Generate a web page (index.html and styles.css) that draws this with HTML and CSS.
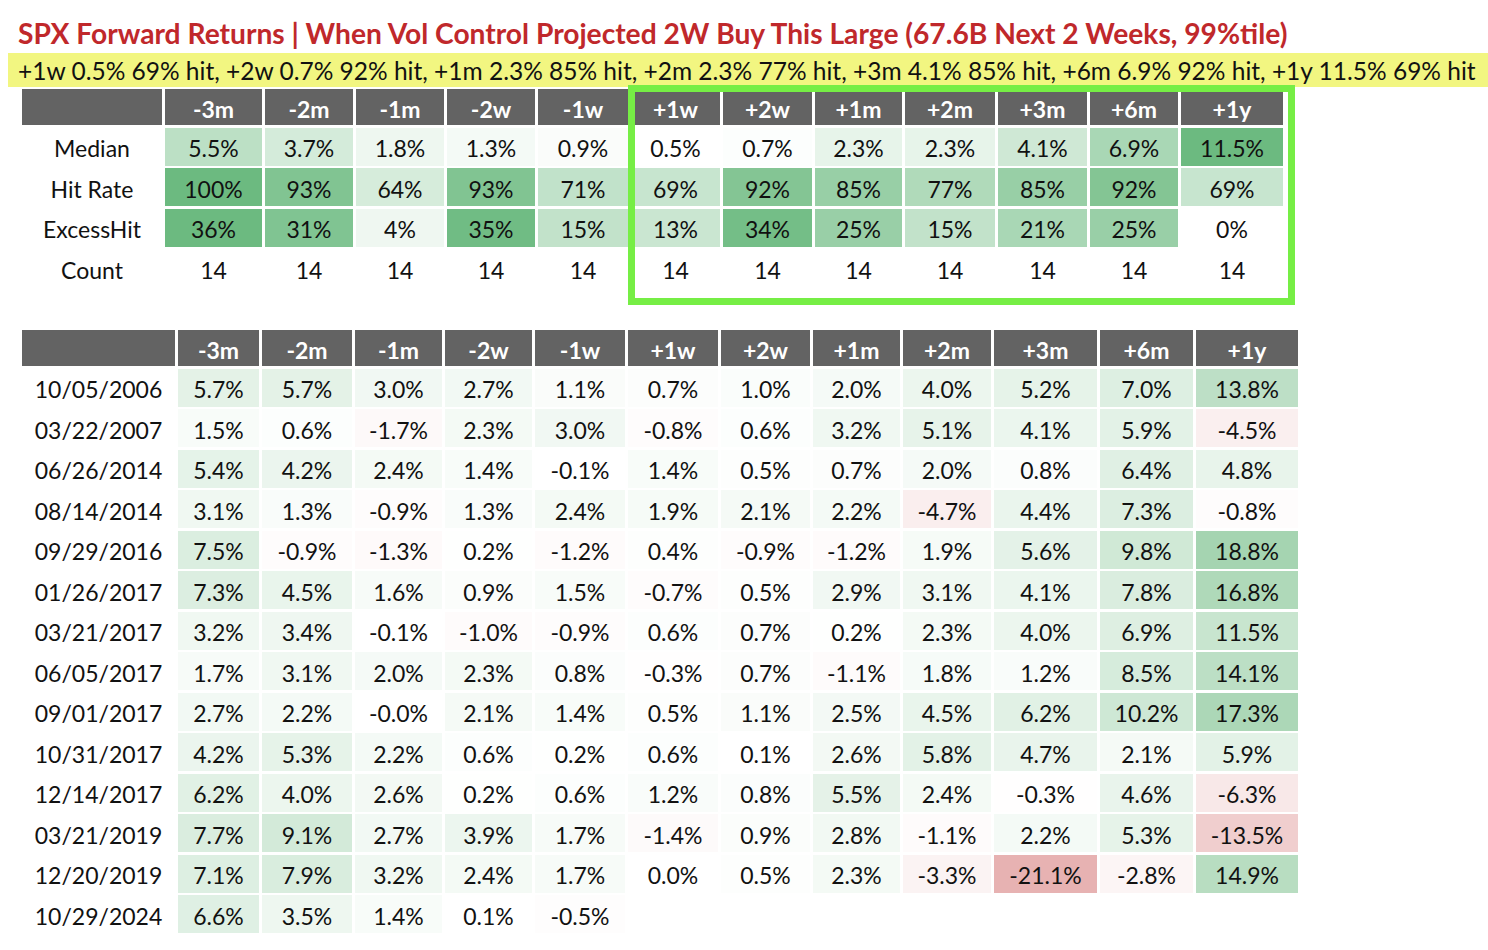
FILE: index.html
```html
<!DOCTYPE html>
<html lang="en">
<head>
<meta charset="utf-8">
<title>SPX Forward Returns</title>
<link rel="stylesheet" href="styles.css">
</head>
<body>
<div class="page">
  <h1 class="title">SPX Forward Returns | When Vol Control Projected 2W Buy This Large (67.6B Next 2 Weeks, 99%tile)</h1>
  <div class="summary">+1w 0.5% 69% hit, +2w 0.7% 92% hit, +1m 2.3% 85% hit, +2m 2.3% 77% hit, +3m 4.1% 85% hit, +6m 6.9% 92% hit, +1y 11.5% 69% hit</div>

  <div class="stats-wrap">
    <div class="grid stats">
      <div class="hd"></div><div class="hd">-3m</div><div class="hd">-2m</div><div class="hd">-1m</div><div class="hd">-2w</div><div class="hd">-1w</div><div class="hd">+1w</div><div class="hd">+2w</div><div class="hd">+1m</div><div class="hd">+2m</div><div class="hd">+3m</div><div class="hd">+6m</div><div class="hd">+1y</div>

      <div class="lbl">Median</div><div class="cell sm">5.5%</div><div class="cell sm">3.7%</div><div class="cell sm">1.8%</div><div class="cell sm">1.3%</div><div class="cell sm">0.9%</div><div class="cell sm">0.5%</div><div class="cell sm">0.7%</div><div class="cell sm">2.3%</div><div class="cell sm">2.3%</div><div class="cell sm">4.1%</div><div class="cell sm">6.9%</div><div class="cell sm">11.5%</div>

      <div class="lbl">Hit Rate</div><div class="cell sh">100%</div><div class="cell sh">93%</div><div class="cell sh">64%</div><div class="cell sh">93%</div><div class="cell sh">71%</div><div class="cell sh">69%</div><div class="cell sh">92%</div><div class="cell sh">85%</div><div class="cell sh">77%</div><div class="cell sh">85%</div><div class="cell sh">92%</div><div class="cell sh">69%</div>

      <div class="lbl">ExcessHit</div><div class="cell se">36%</div><div class="cell se">31%</div><div class="cell se">4%</div><div class="cell se">35%</div><div class="cell se">15%</div><div class="cell se">13%</div><div class="cell se">34%</div><div class="cell se">25%</div><div class="cell se">15%</div><div class="cell se">21%</div><div class="cell se">25%</div><div class="cell se">0%</div>

      <div class="lbl">Count</div><div class="cell">14</div><div class="cell">14</div><div class="cell">14</div><div class="cell">14</div><div class="cell">14</div><div class="cell">14</div><div class="cell">14</div><div class="cell">14</div><div class="cell">14</div><div class="cell">14</div><div class="cell">14</div><div class="cell">14</div>
    </div>
    <div class="highlight"></div>
  </div>

  <div class="grid events">
    <div class="hd"></div><div class="hd">-3m</div><div class="hd">-2m</div><div class="hd">-1m</div><div class="hd">-2w</div><div class="hd">-1w</div><div class="hd">+1w</div><div class="hd">+2w</div><div class="hd">+1m</div><div class="hd">+2m</div><div class="hd">+3m</div><div class="hd">+6m</div><div class="hd">+1y</div>

    <div class="lbl">10/05/2006</div><div class="cell sd">5.7%</div><div class="cell sd">5.7%</div><div class="cell sd">3.0%</div><div class="cell sd">2.7%</div><div class="cell sd">1.1%</div><div class="cell sd">0.7%</div><div class="cell sd">1.0%</div><div class="cell sd">2.0%</div><div class="cell sd">4.0%</div><div class="cell sd">5.2%</div><div class="cell sd">7.0%</div><div class="cell sd">13.8%</div>
    <div class="lbl">03/22/2007</div><div class="cell sd">1.5%</div><div class="cell sd">0.6%</div><div class="cell sd">-1.7%</div><div class="cell sd">2.3%</div><div class="cell sd">3.0%</div><div class="cell sd">-0.8%</div><div class="cell sd">0.6%</div><div class="cell sd">3.2%</div><div class="cell sd">5.1%</div><div class="cell sd">4.1%</div><div class="cell sd">5.9%</div><div class="cell sd">-4.5%</div>
    <div class="lbl">06/26/2014</div><div class="cell sd">5.4%</div><div class="cell sd">4.2%</div><div class="cell sd">2.4%</div><div class="cell sd">1.4%</div><div class="cell sd">-0.1%</div><div class="cell sd">1.4%</div><div class="cell sd">0.5%</div><div class="cell sd">0.7%</div><div class="cell sd">2.0%</div><div class="cell sd">0.8%</div><div class="cell sd">6.4%</div><div class="cell sd">4.8%</div>
    <div class="lbl">08/14/2014</div><div class="cell sd">3.1%</div><div class="cell sd">1.3%</div><div class="cell sd">-0.9%</div><div class="cell sd">1.3%</div><div class="cell sd">2.4%</div><div class="cell sd">1.9%</div><div class="cell sd">2.1%</div><div class="cell sd">2.2%</div><div class="cell sd">-4.7%</div><div class="cell sd">4.4%</div><div class="cell sd">7.3%</div><div class="cell sd">-0.8%</div>
    <div class="lbl">09/29/2016</div><div class="cell sd">7.5%</div><div class="cell sd">-0.9%</div><div class="cell sd">-1.3%</div><div class="cell sd">0.2%</div><div class="cell sd">-1.2%</div><div class="cell sd">0.4%</div><div class="cell sd">-0.9%</div><div class="cell sd">-1.2%</div><div class="cell sd">1.9%</div><div class="cell sd">5.6%</div><div class="cell sd">9.8%</div><div class="cell sd">18.8%</div>
    <div class="lbl">01/26/2017</div><div class="cell sd">7.3%</div><div class="cell sd">4.5%</div><div class="cell sd">1.6%</div><div class="cell sd">0.9%</div><div class="cell sd">1.5%</div><div class="cell sd">-0.7%</div><div class="cell sd">0.5%</div><div class="cell sd">2.9%</div><div class="cell sd">3.1%</div><div class="cell sd">4.1%</div><div class="cell sd">7.8%</div><div class="cell sd">16.8%</div>
    <div class="lbl">03/21/2017</div><div class="cell sd">3.2%</div><div class="cell sd">3.4%</div><div class="cell sd">-0.1%</div><div class="cell sd">-1.0%</div><div class="cell sd">-0.9%</div><div class="cell sd">0.6%</div><div class="cell sd">0.7%</div><div class="cell sd">0.2%</div><div class="cell sd">2.3%</div><div class="cell sd">4.0%</div><div class="cell sd">6.9%</div><div class="cell sd">11.5%</div>
    <div class="lbl">06/05/2017</div><div class="cell sd">1.7%</div><div class="cell sd">3.1%</div><div class="cell sd">2.0%</div><div class="cell sd">2.3%</div><div class="cell sd">0.8%</div><div class="cell sd">-0.3%</div><div class="cell sd">0.7%</div><div class="cell sd">-1.1%</div><div class="cell sd">1.8%</div><div class="cell sd">1.2%</div><div class="cell sd">8.5%</div><div class="cell sd">14.1%</div>
    <div class="lbl">09/01/2017</div><div class="cell sd">2.7%</div><div class="cell sd">2.2%</div><div class="cell sd">-0.0%</div><div class="cell sd">2.1%</div><div class="cell sd">1.4%</div><div class="cell sd">0.5%</div><div class="cell sd">1.1%</div><div class="cell sd">2.5%</div><div class="cell sd">4.5%</div><div class="cell sd">6.2%</div><div class="cell sd">10.2%</div><div class="cell sd">17.3%</div>
    <div class="lbl">10/31/2017</div><div class="cell sd">4.2%</div><div class="cell sd">5.3%</div><div class="cell sd">2.2%</div><div class="cell sd">0.6%</div><div class="cell sd">0.2%</div><div class="cell sd">0.6%</div><div class="cell sd">0.1%</div><div class="cell sd">2.6%</div><div class="cell sd">5.8%</div><div class="cell sd">4.7%</div><div class="cell sd">2.1%</div><div class="cell sd">5.9%</div>
    <div class="lbl">12/14/2017</div><div class="cell sd">6.2%</div><div class="cell sd">4.0%</div><div class="cell sd">2.6%</div><div class="cell sd">0.2%</div><div class="cell sd">0.6%</div><div class="cell sd">1.2%</div><div class="cell sd">0.8%</div><div class="cell sd">5.5%</div><div class="cell sd">2.4%</div><div class="cell sd">-0.3%</div><div class="cell sd">4.6%</div><div class="cell sd">-6.3%</div>
    <div class="lbl">03/21/2019</div><div class="cell sd">7.7%</div><div class="cell sd">9.1%</div><div class="cell sd">2.7%</div><div class="cell sd">3.9%</div><div class="cell sd">1.7%</div><div class="cell sd">-1.4%</div><div class="cell sd">0.9%</div><div class="cell sd">2.8%</div><div class="cell sd">-1.1%</div><div class="cell sd">2.2%</div><div class="cell sd">5.3%</div><div class="cell sd">-13.5%</div>
    <div class="lbl">12/20/2019</div><div class="cell sd">7.1%</div><div class="cell sd">7.9%</div><div class="cell sd">3.2%</div><div class="cell sd">2.4%</div><div class="cell sd">1.7%</div><div class="cell sd">0.0%</div><div class="cell sd">0.5%</div><div class="cell sd">2.3%</div><div class="cell sd">-3.3%</div><div class="cell sd">-21.1%</div><div class="cell sd">-2.8%</div><div class="cell sd">14.9%</div>
    <div class="lbl">10/29/2024</div><div class="cell sd">6.6%</div><div class="cell sd">3.5%</div><div class="cell sd">1.4%</div><div class="cell sd">0.1%</div><div class="cell sd">-0.5%</div>
  </div>
</div>
<script src="script.js"></script>
</body>
</html>
```

FILE: styles.css
```css
html, body {
  margin: 0;
  padding: 0;
  background: #ffffff;
}

.page {
  font-family: Lato, "Open Sans", "Liberation Sans", sans-serif;
  color: #111111;
}

.title {
  margin: 0;
  padding: 16px 0 0 18px;
  height: 34px;
  line-height: 34px;
  font-size: 28.2px;
  font-weight: 700;
  color: #c0282b;
  white-space: nowrap;
}

.summary {
  margin: 3px 0 0 8px;
  padding-left: 10px;
  height: 34px;
  line-height: 35px;
  background: #f2f681;
  font-size: 24.5px;
  color: #111111;
  white-space: nowrap;
  overflow: hidden;
}

.stats-wrap {
  position: relative;
  margin: 2px 0 0 22px;
  width: 1276px;
}

.grid {
  display: grid;
  column-gap: 3px;
  row-gap: 2.5px;
  grid-auto-rows: 38px;
}

.stats {
  grid-template-columns: 140px 97px 88px 88px 88px 90px 89px 89px 87px 90px 89px 88px 102px;
  grid-template-rows: 36px;
}

.events {
  margin: 43px 0 0 22px;
  grid-template-columns: 153px 81px 90px 87px 87px 90px 90px 89px 87px 88px 103px 93px 102px;
  grid-template-rows: 36px;
}

.hd {
  background: #636363;
  color: #ffffff;
  font-weight: 700;
  font-size: 23px;
  padding-top: 3px;
  display: flex;
  align-items: center;
  justify-content: center;
}

.lbl,
.cell {
  display: flex;
  align-items: center;
  justify-content: center;
  padding-top: 3px;
  font-size: 23px;
  white-space: nowrap;
}

.highlight {
  position: absolute;
  left: 606px;
  top: -4px;
  width: 653px;
  height: 206px;
  border: 7px solid #76ee45;
  pointer-events: none;
}
```

FILE: script.js
```js
(function () {
  var GREEN_TOP = [108, 186, 128];
  var GREEN_LOW = [165, 212, 177];
  var RED_LOW = [231, 178, 178];
  var scales = { sm: [0.5, 11.5], sh: [50, 100], se: [0, 36] };

  function mix(c, t) {
    t = Math.max(0, Math.min(1, t));
    return 'rgb(' + Math.round(255 + (c[0] - 255) * t) + ',' +
      Math.round(255 + (c[1] - 255) * t) + ',' +
      Math.round(255 + (c[2] - 255) * t) + ')';
  }

  var cells = document.querySelectorAll('.cell');
  for (var i = 0; i < cells.length; i++) {
    var el = cells[i];
    var v = parseFloat(el.textContent);
    if (isNaN(v)) continue;
    for (var k in scales) {
      if (el.classList.contains(k)) {
        var s = scales[k];
        el.style.backgroundColor = mix(GREEN_TOP, (v - s[0]) / (s[1] - s[0]));
      }
    }
    if (el.classList.contains('sd')) {
      if (v >= 0) {
        el.style.backgroundColor = mix(GREEN_LOW, v / 18.8);
      } else {
        el.style.backgroundColor = mix(RED_LOW, -v / 21.1);
      }
    }
  }
})();
```
